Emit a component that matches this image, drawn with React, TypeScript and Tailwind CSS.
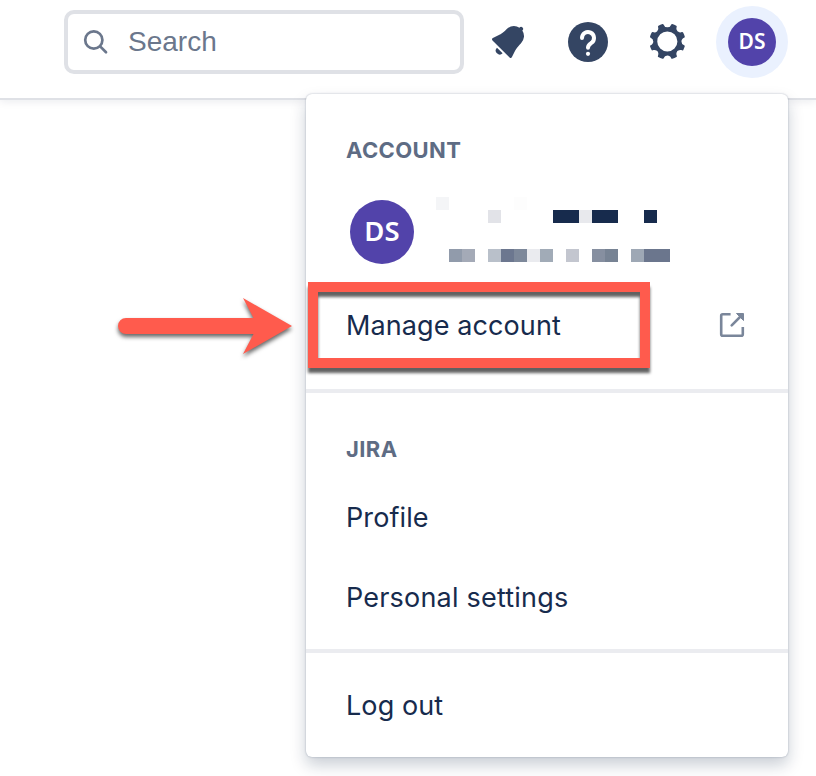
import React from "react";

const mosaic: [number, number, string][] = [
  [1, 1, "bg-[#f4f5f7]"],
  [1, 7, "bg-[#fdfdfd]"],
  [2, 5, "bg-[#e2e3e8]"],
  [2, 10, "bg-[#172b4d]"],
  [2, 11, "bg-[#172b4d]"],
  [2, 12, "bg-[#e8e9ed]"],
  [2, 13, "bg-[#172b4d]"],
  [2, 14, "bg-[#172b4d]"],
  [2, 17, "bg-[#172b4d]"],
  [5, 2, "bg-[#919bab]"],
  [5, 3, "bg-[#a4aab7]"],
  [5, 5, "bg-[#b9c0ca]"],
  [5, 6, "bg-[#6c778f]"],
  [5, 7, "bg-[#7d889a]"],
  [5, 8, "bg-[#eaebef]"],
  [5, 9, "bg-[#a1abb7]"],
  [5, 11, "bg-[#c3c6cf]"],
  [5, 13, "bg-[#868fa0]"],
  [5, 14, "bg-[#778394]"],
  [5, 16, "bg-[#9ea8b5]"],
  [5, 17, "bg-[#6b768d]"],
  [5, 18, "bg-[#6b768d]"],
];

function Header() {
  return (
    <header className="flex h-[100px] items-start border-b-2 border-[#dfe1e6] bg-white pl-16 shadow-[0_2px_8px_rgba(9,30,66,0.08)]">
      <div className="mt-[10px] flex h-16 w-[400px] items-center rounded-[10px] border-4 border-[#dfe1e6] pl-2">
        <svg className="size-10" viewBox="0 0 40 40" fill="none" stroke="#6b778c" strokeWidth="2.7" strokeLinecap="round">
          <circle cx="17.8" cy="18" r="8.6" />
          <path d="M24.4 24.6l5.6 5.6" />
        </svg>
        <span className="ml-[12px] font-['Liberation_Sans',sans-serif] text-[28px] leading-8 text-[#6b778c]">Search</span>
      </div>
      <div className="mt-[18px] ml-5 flex text-[#344563]">
        <svg className="size-12" viewBox="0 0 24 24" fill="currentColor">
          <path d="M6.485 17.669a2 2 0 002.829 0l-2.829-2.83a2 2 0 000 2.83zm4.897-12.191l-.725.725c-.782.782-2.21 1.813-3.206 2.311l-3.017 1.509c-.495.248-.584.774-.187 1.171l8.556 8.556c.398.396.922.313 1.171-.188l1.51-3.016c.494-.988 1.526-2.42 2.311-3.206l.725-.726a5.048 5.048 0 00.64-6.356 1.01 1.01 0 10-1.354-1.494c-.023.025-.046.049-.066.075a5.043 5.043 0 00-2.788-.84 5.036 5.036 0 00-3.57 1.478z" />
        </svg>
        <svg className="ml-8 size-12" viewBox="0 0 48 48" fill="none">
          <circle cx="24" cy="24" r="20" fill="currentColor" />
          <path d="M18 20a6 6 0 1 1 9.7 4.7c-2.2 1.6-3.7 2.2-3.7 5" stroke="white" strokeWidth="4" strokeLinecap="round" />
          <circle cx="24" cy="35.8" r="2.1" fill="white" />
        </svg>
        <svg className="ml-8 size-12" viewBox="0 0 24 24" fill="currentColor">
          <path d="M11.701 16.7a5.002 5.002 0 110-10.003 5.002 5.002 0 010 10.004m8.368-3.117a1.995 1.995 0 01-1.346-1.885c0-.876.563-1.613 1.345-1.885a.48.48 0 00.315-.574 8.947 8.947 0 00-.836-1.993.477.477 0 00-.598-.195 2.04 2.04 0 01-1.29.08 1.988 1.988 0 01-1.404-1.395 2.04 2.04 0 01.076-1.297.478.478 0 00-.196-.597 8.98 8.98 0 00-1.975-.826.479.479 0 00-.574.314 1.995 1.995 0 01-1.885 1.346 1.994 1.994 0 01-1.884-1.345.482.482 0 00-.575-.315c-.708.2-1.379.485-2.004.842a.47.47 0 00-.198.582A2.002 2.002 0 014.445 7.06a.478.478 0 00-.595.196 8.946 8.946 0 00-.833 1.994.48.48 0 00.308.572 1.995 1.995 0 011.323 1.877c0 .867-.552 1.599-1.324 1.877a.479.479 0 00-.308.57 8.99 8.99 0 00.723 1.79.477.477 0 00.624.194c.595-.273 1.343-.264 2.104.238.117.077.225.185.302.3.527.8.512 1.58.198 2.188a.473.473 0 00.168.628 8.946 8.946 0 002.11.897.474.474 0 00.57-.313 1.995 1.995 0 011.886-1.353c.878 0 1.618.567 1.887 1.353a.475.475 0 00.57.313 8.964 8.964 0 002.084-.883.473.473 0 00.167-.631c-.318-.608-.337-1.393.191-2.195.077-.116.185-.225.302-.302.772-.511 1.527-.513 2.125-.23a.477.477 0 00.628-.19 8.925 8.925 0 00.728-1.793.478.478 0 00-.314-.573" />
        </svg>
      </div>
      <div className="mt-[6px] ml-6 flex size-[72px] items-center justify-center rounded-full bg-[#eaf1fe]">
        <div className="flex size-12 items-center justify-center rounded-full bg-[#5243aa] font-['Noto_Sans',sans-serif] text-[21px] font-semibold text-white">
          DS
        </div>
      </div>
    </header>
  );
}

function Heading({ children }: { children: React.ReactNode }) {
  return <h2 className="px-10 text-[22px] leading-8 font-bold tracking-[0.4px] text-[#5e6c84]">{children}</h2>;
}

function Item({ children, icon }: { children: React.ReactNode; icon?: React.ReactNode }) {
  return (
    <div className="flex h-20 items-center justify-between px-10 text-[27px] leading-10 tracking-[0.1px] text-[#172b4d]">
      <span className="pt-[2px]">{children}</span>
      {icon}
    </div>
  );
}

function ExternalIcon() {
  return (
    <svg className="mr-[-4px] size-10" viewBox="0 0 40 40" fill="none" stroke="#7a869a" strokeWidth="2.6">
      <path d="M18.6 9.2H10.7a1.5 1.5 0 0 0-1.5 1.5v18.6a1.5 1.5 0 0 0 1.5 1.5h18.6a1.5 1.5 0 0 0 1.500-1.500V22" />
      <path d="M29.5 10.500L19.700 20.300" strokeLinecap="round" />
      <path d="M24.500 8.500h7v7z" fill="#7a869a" strokeWidth="1" strokeLinejoin="round" />
    </svg>
  );
}

function Menu() {
  return (
    <div className="absolute top-[94px] left-[306px] h-[663px] w-[482px] rounded-[6px] bg-white shadow-[0_0_2px_rgba(9,30,66,0.31),0_8px_16px_rgba(9,30,66,0.22)]">
      <section className="h-[299px] border-b-4 border-[#ebecf0] pt-10">
        <Heading>ACCOUNT</Heading>
        <div className="mt-[31px] mb-[20px] flex h-[68px] items-start pl-11">
          <div className="mt-[3px] flex size-16 items-center justify-center rounded-full bg-[#5243aa] pb-[2px] font-['Noto_Sans',sans-serif] text-[27.5px] font-semibold text-white">
            DS
          </div>
          <div className="ml-[22px] grid grid-cols-[repeat(18,13px)] grid-rows-[repeat(5,13px)]">
            {mosaic.map(([row, col, color]) => (
              <div key={`${row}-${col}`} className={color} style={{ gridRow: row, gridColumn: col }} />
            ))}
          </div>
        </div>
        <Item icon={<ExternalIcon />}>Manage account</Item>
      </section>
      <section className="h-[260px] border-b-4 border-[#ebecf0] pt-10">
        <Heading>JIRA</Heading>
        <div className="mt-3">
          <Item>Profile</Item>
          <Item>
            <span className="tracking-[0.2px]">Personal settings</span>
          </Item>
        </div>
      </section>
      <section className="pt-3">
        <Item>Log out</Item>
      </section>
    </div>
  );
}

export default function App() {
  return (
    <div className="relative h-[776px] w-[816px] overflow-hidden bg-white font-['Inter',sans-serif]">
      <Header />
      <Menu />
      <div className="absolute top-[282px] left-[308px] h-[86px] w-[342px] border-10 border-[#ff5b4d] drop-shadow-[0_5px_1.5px_rgba(0,0,0,0.62)]" />
      <svg className="absolute top-[290px] left-[110px] h-[76px] w-[190px] overflow-visible drop-shadow-[0_3px_2px_rgba(0,0,0,0.6)]" viewBox="0 0 190 76" fill="#ff5b4d">
        <path d="M16 28H143.500L133 8L182 36L133 64L143.500 44H16A8 8 0 0 1 16 28Z" />
      </svg>
    </div>
  );
}
